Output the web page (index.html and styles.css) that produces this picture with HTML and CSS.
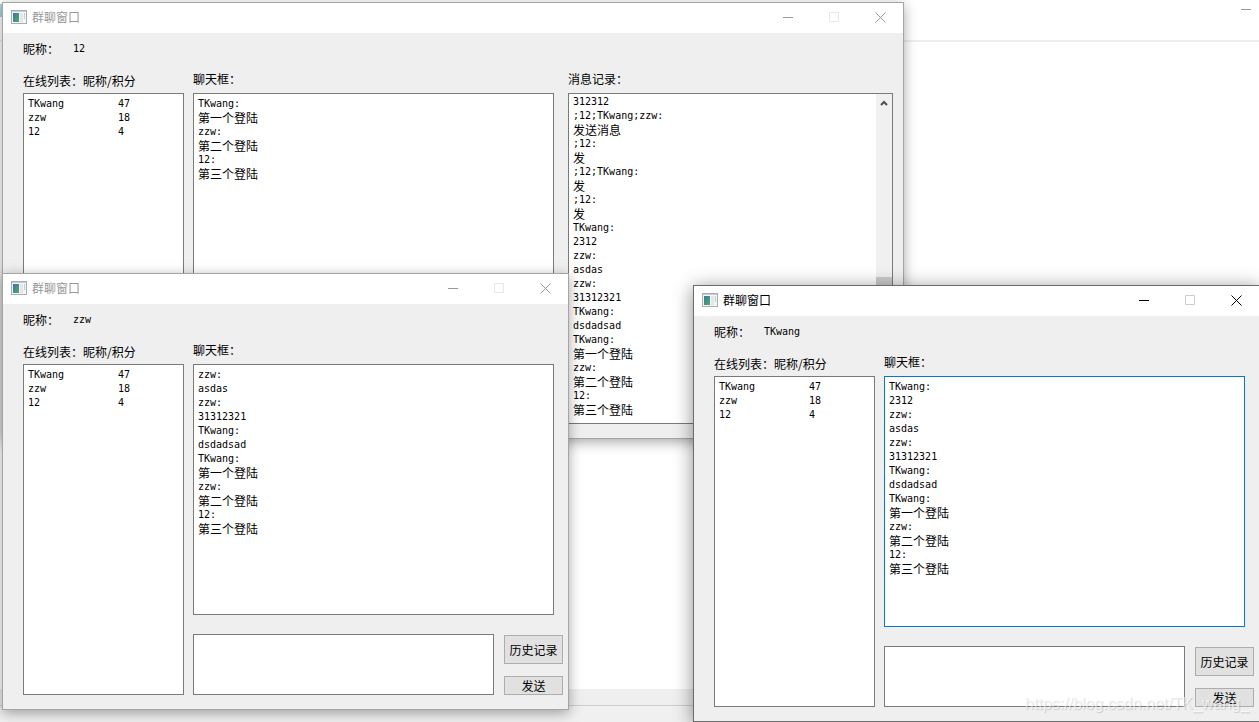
FILE: index.html
```
<!DOCTYPE html>
<html lang="zh-CN">
<head>
<meta charset="utf-8">
<title>群聊窗口</title>
<link rel="stylesheet" href="styles.css">
</head>
<body>
<svg class="defs" aria-hidden="true">
  <defs>
    <linearGradient id="tile" x1="0" y1="0" x2="1" y2="1">
      <stop offset="0" stop-color="#3f74a6"/>
      <stop offset="1" stop-color="#4dab6b"/>
    </linearGradient>
    <symbol id="app" viewBox="0 0 16 14">
      <rect x="0.5" y="0.5" width="15" height="13" fill="#f4f5f6" stroke="#a9adb3"/>
      <rect x="1" y="1" width="14" height="1" fill="#c9cdd2"/>
      <rect x="2" y="3" width="6" height="9" fill="url(#tile)"/>
      <rect x="9" y="3" width="3" height="9" fill="#e3e5e7"/>
      <rect x="13" y="3" width="1" height="6" fill="#b9d8c4"/>
    </symbol>
    <symbol id="min" viewBox="0 0 11 11"><path d="M0 5.5H10" stroke="currentColor"/></symbol>
    <symbol id="max" viewBox="0 0 11 11"><path d="M.5 .5H9.500V9.500H.5Z" fill="none" stroke="currentColor"/></symbol>
    <symbol id="close" viewBox="0 0 11 11"><path d="M.5 .5L10.500 10.500M10.500 .5L.5 10.500" stroke="currentColor" stroke-width="1"/></symbol>
  </defs>
</svg>
<main class="desktop">
  <div class="back-head"><span class="back-tab"></span><svg class="glyph"><use href="#min"/></svg></div>
  <div class="back-page"></div>
  <div class="back-tools"></div>
  <div class="back-status"></div>

  <section class="window window-wide">
    <header class="titlebar">
      <svg class="app-icon"><use href="#app"/></svg>
      <h1 class="title">群聊窗口</h1>
      <button class="control" aria-label="最小化"><svg class="glyph"><use href="#min"/></svg></button>
      <button class="control" aria-label="最大化" disabled><svg class="glyph"><use href="#max"/></svg></button>
      <button class="control" aria-label="关闭"><svg class="glyph"><use href="#close"/></svg></button>
    </header>
    <div class="content">
      <div class="nick"><span>昵称：</span><span class="latin">12</span></div>
      <div class="columns">
        <div class="members">
          <h2 class="label label-low">在线列表：昵称/积分</h2>
          <div class="box">
            <table class="scores latin">
              <tr><td>TKwang</td><td>47</td></tr>
              <tr><td>zzw</td><td>18</td></tr>
              <tr><td>12</td><td>4</td></tr>
            </table>
          </div>
        </div>
        <div class="chat">
          <h2 class="label">聊天框：</h2>
          <div class="box chat-log">
            <p class="latin">TKwang:</p><p>第一个登陆</p>
            <p class="latin">zzw:</p><p>第二个登陆</p>
            <p class="latin">12:</p><p>第三个登陆</p>
          </div>
          <div class="composer">
            <textarea class="entry" aria-label="消息"></textarea>
            <div class="actions">
              <button class="action history">历史记录</button>
              <button class="action">发送</button>
            </div>
          </div>
        </div>
        <div class="records">
          <h2 class="label">消息记录：</h2>
          <div class="box record-box">
            <div class="record-log">
              <p class="latin">312312</p>
              <p class="latin">;12;TKwang;zzw:</p><p>发送消息</p>
              <p class="latin">;12:</p><p>发</p>
              <p class="latin">;12;TKwang:</p><p>发</p>
              <p class="latin">;12:</p><p>发</p>
              <p class="latin">TKwang:</p><p class="latin">2312</p>
              <p class="latin">zzw:</p><p class="latin">asdas</p>
              <p class="latin">zzw:</p><p class="latin">31312321</p>
              <p class="latin">TKwang:</p><p class="latin">dsdadsad</p>
              <p class="latin">TKwang:</p><p>第一个登陆</p>
              <p class="latin">zzw:</p><p>第二个登陆</p>
              <p class="latin">12:</p><p>第三个登陆</p>
            </div>
            <div class="scrollbar">
              <svg class="arrow" viewBox="0 0 8 6"><path d="M1 5L4 2L7 5" fill="none" stroke="#505050" stroke-width="2"/></svg>
              <div class="thumb"></div>
            </div>
          </div>
        </div>
      </div>
    </div>
  </section>

  <section class="window window-left">
    <header class="titlebar">
      <svg class="app-icon"><use href="#app"/></svg>
      <h1 class="title">群聊窗口</h1>
      <button class="control" aria-label="最小化"><svg class="glyph"><use href="#min"/></svg></button>
      <button class="control" aria-label="最大化" disabled><svg class="glyph"><use href="#max"/></svg></button>
      <button class="control" aria-label="关闭"><svg class="glyph"><use href="#close"/></svg></button>
    </header>
    <div class="content">
      <div class="nick"><span>昵称：</span><span class="latin">zzw</span></div>
      <div class="columns">
        <div class="members">
          <h2 class="label label-low">在线列表：昵称/积分</h2>
          <div class="box">
            <table class="scores latin">
              <tr><td>TKwang</td><td>47</td></tr>
              <tr><td>zzw</td><td>18</td></tr>
              <tr><td>12</td><td>4</td></tr>
            </table>
          </div>
        </div>
        <div class="chat">
          <h2 class="label">聊天框：</h2>
          <div class="box chat-log">
            <p class="latin">zzw:</p><p class="latin">asdas</p>
            <p class="latin">zzw:</p><p class="latin">31312321</p>
            <p class="latin">TKwang:</p><p class="latin">dsdadsad</p>
            <p class="latin">TKwang:</p><p>第一个登陆</p>
            <p class="latin">zzw:</p><p>第二个登陆</p>
            <p class="latin">12:</p><p>第三个登陆</p>
          </div>
          <div class="composer">
            <textarea class="entry" aria-label="消息"></textarea>
            <div class="actions">
              <button class="action history">历史记录</button>
              <button class="action">发送</button>
            </div>
          </div>
        </div>
      </div>
    </div>
  </section>

  <section class="window window-right active">
    <header class="titlebar">
      <svg class="app-icon"><use href="#app"/></svg>
      <h1 class="title">群聊窗口</h1>
      <button class="control" aria-label="最小化"><svg class="glyph"><use href="#min"/></svg></button>
      <button class="control" aria-label="最大化" disabled><svg class="glyph"><use href="#max"/></svg></button>
      <button class="control" aria-label="关闭"><svg class="glyph"><use href="#close"/></svg></button>
    </header>
    <div class="content">
      <div class="nick"><span>昵称：</span><span class="latin">TKwang</span></div>
      <div class="columns">
        <div class="members">
          <h2 class="label label-low">在线列表：昵称/积分</h2>
          <div class="box">
            <table class="scores latin">
              <tr><td>TKwang</td><td>47</td></tr>
              <tr><td>zzw</td><td>18</td></tr>
              <tr><td>12</td><td>4</td></tr>
            </table>
          </div>
        </div>
        <div class="chat">
          <h2 class="label">聊天框：</h2>
          <div class="box chat-log focused">
            <p class="latin">TKwang:</p><p class="latin">2312</p>
            <p class="latin">zzw:</p><p class="latin">asdas</p>
            <p class="latin">zzw:</p><p class="latin">31312321</p>
            <p class="latin">TKwang:</p><p class="latin">dsdadsad</p>
            <p class="latin">TKwang:</p><p>第一个登陆</p>
            <p class="latin">zzw:</p><p>第二个登陆</p>
            <p class="latin">12:</p><p>第三个登陆</p>
          </div>
          <div class="composer">
            <textarea class="entry" aria-label="消息"></textarea>
            <div class="actions">
              <button class="action history">历史记录</button>
              <button class="action">发送</button>
            </div>
          </div>
        </div>
      </div>
    </div>
  </section>
  <div class="watermark">https://blog.csdn.net/TK_wang_</div>
</main>
</body>
</html>
```
FILE: styles.css
```
* { box-sizing: border-box; }
body {
  margin: 0;
  color: #000;
  font: 12px/14px "Noto Sans CJK SC", sans-serif;
}
h1, h2, p { margin: 0; font: inherit; }
button, textarea { font: inherit; color: inherit; }
.defs { position: absolute; width: 0; height: 0; }

/* Application behind the chat windows */
.desktop {
  position: relative;
  display: flex;
  flex-direction: column;
  height: 100vh;
  overflow: hidden;
  background: #fff;
}
.back-head {
  display: flex;
  justify-content: space-between;
  height: 42px;
  padding: 4px 7px 0 0;
  border-bottom: 2px solid #eee;
  color: #999;
}
.back-tab { width: 3px; height: 13px; background: #a9d3dc; }
.back-page { flex: 1; }
.back-tools { height: 17px; background: #efefef; border-bottom: 1px solid #ccc; }
.back-status { height: 16px; background: #f0f0f0; }

.window {
  position: absolute;
  display: flex;
  flex-direction: column;
  width: 567px;
  height: 437px;
  border: 1px solid #a5a5a5;
  background: #efefef;
  box-shadow: 0 3px 12px rgba(0, 0, 0, .35);
}
.window-wide { left: 2px; top: 2px; width: 902px; }
.window-left { left: 2px; top: 273px; }
.window-right { left: 693px; top: 285px; }
.active { border-color: #6b6b6b; box-shadow: 0 3px 18px rgba(0, 0, 0, .45); }

.titlebar {
  display: flex;
  align-items: center;
  height: 30px;
  padding: 0 0 2px 8px;
  background: #fff;
  color: #999;
}
.active .titlebar { color: #000; }
.app-icon { width: 16px; height: 14px; }
.title { flex: 1; padding-left: 5px; }
.control {
  display: flex;
  align-items: center;
  justify-content: center;
  width: 46px;
  height: 28px;
  padding: 0;
  border: 0;
  background: none;
}
.control:disabled { color: #e8e8e8; }
.active .control:disabled { color: #ccc; }
.glyph { width: 11px; height: 11px; }

.content {
  flex: 1;
  display: flex;
  flex-direction: column;
  gap: 16px;
  padding: 9px 5px 14px 20px;
}
.nick { display: flex; gap: 14px; }
.columns { flex: 1; display: flex; }
.members { display: flex; flex-direction: column; width: 161px; margin-right: 9px; }
.chat { display: flex; flex-direction: column; width: 370px; }
.records { flex: 1; display: flex; flex-direction: column; margin: 0 5px; }
.label { height: 21px; white-space: nowrap; }
.label-low { padding-top: 2px; }
.latin { font-family: "DejaVu Sans Mono", monospace; font-size: 10px; }

.box {
  flex: 1;
  min-height: 0;
  padding: 3px 4px;
  border: 1px solid #7a7a7a;
  background: #fff;
  overflow: hidden;
}
.chat-log { margin-right: 9px; }
.focused { border-color: #0078d7; }
.scores { border-collapse: collapse; }
.scores td { height: 14px; padding: 0; line-height: 14px; }
.scores td:first-child { width: 90px; }

.composer { display: flex; gap: 10px; margin-top: 19px; }
.entry {
  width: 301px;
  height: 61px;
  border: 1px solid #7a7a7a;
  background: #fff;
  resize: none;
}
.actions { flex: 1; display: flex; flex-direction: column; gap: 12px; padding-top: 1px; }
.action {
  height: 19px;
  padding: 0;
  border: 1px solid #adadad;
  background: #e1e1e1;
  white-space: nowrap;
}
.history { height: 29px; }

.record-box { display: flex; padding: 0; }
.record-log { flex: 1; padding: 1px 4px; }
.scrollbar {
  display: flex;
  flex-direction: column;
  align-items: center;
  width: 16px;
  padding-top: 6px;
  background: #f0f0f0;
}
.arrow { width: 8px; height: 6px; }
.thumb { width: 16px; height: 124px; margin-top: 171px; background: #cdcdcd; }

.watermark {
  position: absolute;
  right: 10px;
  bottom: 9px;
  font: 16px/18px "Liberation Sans", Arial, sans-serif;
  color: rgba(255, 255, 255, .6);
  text-shadow: 1px 1px 1px rgba(0, 0, 0, .15);
}
```
